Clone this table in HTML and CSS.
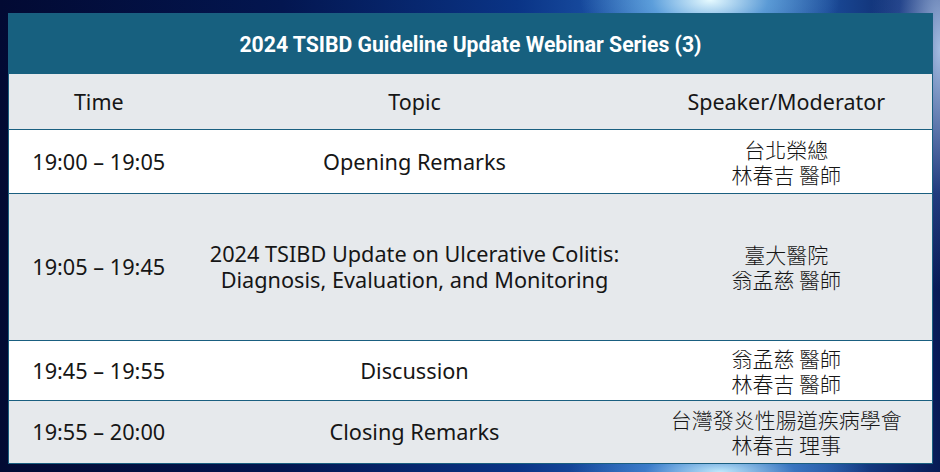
FILE: index.html
```html
<!DOCTYPE html>
<html>
<head>
<meta charset="utf-8">
<link rel="stylesheet" href="styles.css">
</head>
<body>
<div class="page">
  <table class="agenda">
    <colgroup>
      <col class="c-time">
      <col class="c-topic">
      <col class="c-speaker">
    </colgroup>
    <thead>
      <tr class="title-row"><th colspan="3">2024 TSIBD Guideline Update Webinar Series (3)</th></tr>
      <tr class="head-row"><th>Time</th><th>Topic</th><th>Speaker/Moderator</th></tr>
    </thead>
    <tbody>
      <tr class="r1 white"><td>19:00 – 19:05</td><td>Opening Remarks</td><td class="cjk"><span class="ln">台北榮總</span><span class="ln">林春吉 醫師</span></td></tr>
      <tr class="r2 gray"><td>19:05 – 19:45</td><td>2024 TSIBD Update on Ulcerative Colitis:<br>Diagnosis, Evaluation, and Monitoring</td><td class="cjk"><span class="ln">臺大醫院</span><span class="ln">翁孟慈 醫師</span></td></tr>
      <tr class="r3 white"><td>19:45 – 19:55</td><td>Discussion</td><td class="cjk"><span class="ln">翁孟慈 醫師</span><span class="ln">林春吉 醫師</span></td></tr>
      <tr class="r4 gray"><td>19:55 – 20:00</td><td>Closing Remarks</td><td class="cjk"><span class="ln">台灣發炎性腸道疾病學會</span><span class="ln">林春吉 理事</span></td></tr>
    </tbody>
  </table>
</div>
</body>
</html>
```

FILE: styles.css
```css
html, body {
  margin: 0;
  padding: 0;
}
body {
  width: 940px;
  height: 472px;
  overflow: hidden;
  background:
    radial-gradient(ellipse 130px 60px at 710px 0px, rgba(230,250,255,1), rgba(130,200,245,0.6) 45%, rgba(60,130,210,0) 100%),
    radial-gradient(ellipse 150px 40px at 720px 472px, rgba(200,240,255,0.95), rgba(90,160,230,0.45) 50%, rgba(60,130,210,0) 100%),
    radial-gradient(ellipse 70px 240px at 940px 50px, rgba(180,205,240,0.9), rgba(80,120,200,0.35) 60%, rgba(40,80,160,0) 100%),
    linear-gradient(90deg, #020a33 0%, #031650 30%, #0a3486 55%, #2766bb 72%, #1a4a98 88%, #081a55 100%);
  font-family: "Noto Sans", "Noto Sans CJK TC", sans-serif;
}
.page {
  padding: 13px 8px 0 8px;
}
.agenda {
  width: 924px;
  border-collapse: collapse;
  table-layout: fixed;
  color: #161616;
  border: 1px solid #1a5f80;
}
.c-time { width: 180px; }
.c-topic { width: 452px; }
.c-speaker { width: 292px; }

.agenda th, .agenda td {
  padding: 0;
  text-align: center;
  vertical-align: middle;
}
.title-row th {
  height: 60px;
  background: #17607f;
  color: #ffffff;
  font-family: Roboto, "Liberation Sans", sans-serif;
  font-weight: 700;
  font-size: 21.2px;
}
.head-row th {
  height: 55px;
  background: #e6e9ec;
  font-weight: 370;
  font-size: 21.5px;
  border-bottom: 1px solid #1a5f80;
}
.agenda td {
  font-size: 21.7px;
  font-weight: 370;
  line-height: 26px;
  border-bottom: 1px solid #1a5f80;
}
.agenda td.cjk {
  font-family: "Noto Sans CJK TC", sans-serif;
  font-weight: 300;
  font-size: 21px;
  line-height: 25px;
}
.ln {
  display: block;
  height: 25px;
}
.white td { background: #ffffff; }
.gray td { background: #e6e9ec; }
.r1 td { height: 63px; }
.r2 td { height: 146px; }
.r3 td { height: 59px; }
.r4 td { height: 62px; }
```
